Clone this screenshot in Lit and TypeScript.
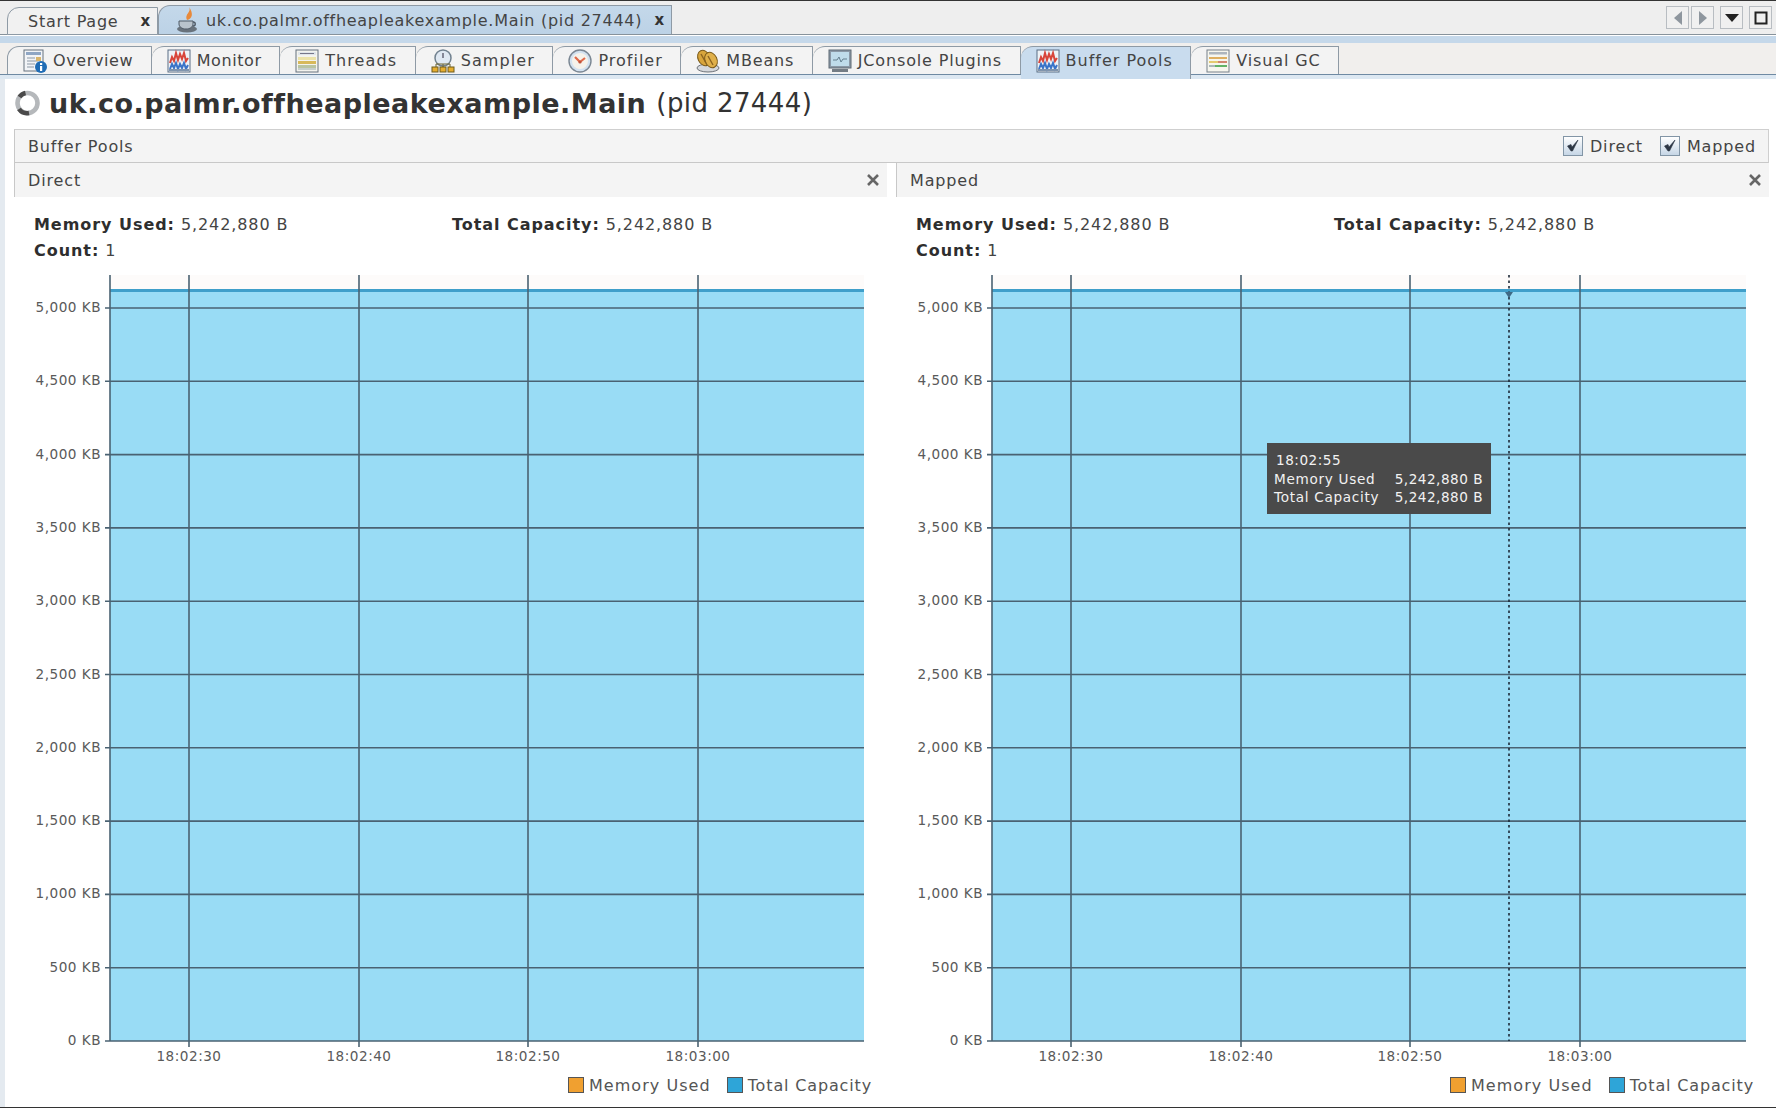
import { LitElement, html, css, svg } from "lit";
import { customElement } from "lit/decorators.js";

const F = svg;
const chartBars = F`<rect x="1" y="1" width="22" height="22" fill="#eef2f6" stroke="#5b6f85"/>
  <path d="M3 14 L5 8 L7 12 L9 4 L11 11 L13 5 L15 10 L17 4 L19 12 L21 9" fill="none" stroke="#d8453a" stroke-width="2"/>
  <path d="M3 20 L5 15 L7 19 L9 14 L11 20 L13 15 L15 19 L17 14 L19 20 L21 16" fill="none" stroke="#3a74c8" stroke-width="2"/>
  <rect x="2" y="20" width="20" height="2" fill="#7f94ad"/>`;

const icons: Record<string, unknown> = {
  overview: F`<rect x="1" y="1" width="19" height="21" fill="#f2f4f7" stroke="#66727f"/><rect x="3" y="3" width="15" height="3" fill="#8fa6c4"/>
    <path d="M4 9h8M4 12h11M4 15h8M4 18h7" stroke="#8c98a6" stroke-width="1.2"/><rect x="13" y="8" width="5" height="4" fill="#d9b56d"/>
    <circle cx="18" cy="18" r="6" fill="#1f6cb5"/><rect x="17" y="17" width="2.2" height="5" fill="#fff"/><rect x="17" y="14" width="2.2" height="2" fill="#fff"/>`,
  monitor: chartBars,
  threads: F`<rect x="1" y="1" width="22" height="22" fill="#f3f3ee" stroke="#66727f"/><rect x="3" y="3" width="18" height="3" fill="#dfe5ea"/><path d="M5 4.5h14" stroke="#778" stroke-width="1"/>
    <rect x="3" y="8" width="18" height="3" fill="#ece3a8"/><rect x="3" y="12" width="18" height="3" fill="#d7b95a"/><rect x="3" y="16" width="18" height="3" fill="#b9c4a2"/><path d="M3 20h18" stroke="#9aa" stroke-width="1"/>`,
  sampler: F`<circle cx="12" cy="9" r="8" fill="#dfe8f2" stroke="#71818f" stroke-width="1.5"/><path d="M12 4v5" stroke="#667" stroke-width="1.5"/>
    <path d="M5 19V15h14v4M12 15v4" stroke="#6c6430" fill="none"/><rect x="1" y="18" width="6" height="5" fill="#e6ad2e" stroke="#6d5b1c"/><rect x="9" y="18" width="6" height="5" fill="#e6ad2e" stroke="#6d5b1c"/><rect x="17" y="18" width="6" height="5" fill="#e6ad2e" stroke="#6d5b1c"/>`,
  profiler: F`<circle cx="12" cy="12" r="11" fill="#d3e2f0" stroke="#7b8793" stroke-width="1.4"/><circle cx="12" cy="12" r="8" fill="#f6f2ea"/>
    <path d="M12 13L7 8M12 13L17 9" stroke="#e06a4a" stroke-width="2.2"/><circle cx="12" cy="13" r="1.6" fill="#c0533a"/>`,
  mbeans: F`<ellipse cx="12" cy="19" rx="11" ry="4" fill="#d5d8dc" stroke="#6d7278"/><ellipse cx="8" cy="9" rx="6" ry="8" fill="#d8a53c" stroke="#7a5a1a" transform="rotate(-25 8 9)"/>
    <ellipse cx="15" cy="11" rx="6" ry="8" fill="#e0b04a" stroke="#7a5a1a" transform="rotate(-25 15 11)"/><path d="M5 5L10 14M12 7L17 16" stroke="#8c6420" stroke-width="1.4"/>`,
  jconsole: F`<rect x="1" y="1" width="22" height="18" fill="#8b99a6" stroke="#5f6a75"/><rect x="3" y="3" width="18" height="14" fill="#bfdcea"/>
    <path d="M5 11h4l2-3 2 5 2-3h4" fill="none" stroke="#64808f"/><rect x="4" y="20" width="16" height="3" fill="#747d85"/>`,
  buffer: chartBars,
  visualgc: F`<rect x="1" y="1" width="22" height="22" fill="#f6f6ee" stroke="#76808a"/><rect x="3" y="3" width="18" height="2.5" fill="#aeb6bd"/>
    <path d="M3 9h18" stroke="#d99e3c" stroke-width="1.6"/><path d="M3 13h9" stroke="#e0c050" stroke-width="1.6"/><path d="M12 13h9" stroke="#c96a50" stroke-width="1.6"/><path d="M3 17h6" stroke="#9aa" stroke-width="1.6"/><path d="M9 17h12" stroke="#3fa345" stroke-width="1.6"/>`,
};

const subTabs: [string, string, number][] = [
  ["Overview", "overview", 0.6], ["Monitor", "monitor", 0.6], ["Threads", "threads", 1.1], ["Sampler", "sampler", 1.1], ["Profiler", "profiler", 1.0],
  ["MBeans", "mbeans", 0.85], ["JConsole Plugins", "jconsole", 0.85], ["Buffer Pools", "buffer", 1.0], ["Visual GC", "visualgc", 0.85],
];

const yVals = [5000, 4500, 4000, 3500, 3000, 2500, 2000, 1500, 1000, 500, 0];
const xTicks: [number, string][] = [[175, "18:02:30"], [345, "18:02:40"], [514, "18:02:50"], [684, "18:03:00"]];
const yOf = (v: number) => 776 - (v / 500) * 73.3;
const fmt = (v: number) => v.toLocaleString("en-US") + " KB";

@customElement("pool-chart")
class PoolChart extends LitElement {
  static properties = { name: {}, hover: { type: Boolean } };
  name = "";
  hover = false;
  static styles = css`
    :host { display: flex; flex-direction: column; min-width: 0; }
    .head { height: 34px; box-sizing: border-box; display: flex; align-items: center; justify-content: space-between; padding: 0 7px 0 13px;
      background: #f4f4f4; border-left: 1px solid #c8c8c8; color: #444; }
    .info { display: grid; grid-template-columns: 418px 1fr; align-content: start; row-gap: 3px; padding: 17px 0 0 20px; height: 51px; line-height: 22.5px; color: #444; letter-spacing: 0.9px; }
    b { color: #2e2e2e; font-weight: 700; letter-spacing: 0.95px; }
    .plot { position: relative; height: 800px; }
    svg.c { display: block; font-family: "DejaVu Sans", sans-serif; }
    .axis { font-size: 13.6px; letter-spacing: 0.5px; fill: #5a5a5a; }
    .tip { position: absolute; left: 371px; top: 178px; width: 224px; height: 71px; box-sizing: border-box; background: #4a4a4a; color: #f2f2f2;
      font-size: 13.6px; letter-spacing: 0.7px; line-height: 18.5px; padding: 8px 8px 0 7px; }
    .tip div { display: flex; justify-content: space-between; white-space: pre; }
    .tip .v { letter-spacing: 0.5px; }
    .time { padding-left: 2px; letter-spacing: 0.5px; }
    .legend { display: flex; justify-content: flex-end; align-items: center; gap: 5px; padding-right: 15px; margin-top: 3px; color: #555; height: 34px; }
    .legend .m { letter-spacing: 1.05px; }
    .sw { width: 14px; height: 14px; border: 1px solid #555; }
    .sw.o { background: #f0a030; }
    .sw.b { background: #2ea5d8; margin-left: 11px; }
  `;
  render() {
    return html`
      <div class="head"><span>${this.name}</span>
        <svg width="14" height="14" viewBox="0 0 14 14"><path d="M2 2L12 12M12 2L2 12" stroke="#666" stroke-width="2.6"/></svg>
      </div>
      <div class="info">
        <span><b>Memory Used:</b> 5,242,880 B</span><span><b>Total Capacity:</b> 5,242,880 B</span>
        <span><b>Count:</b> 1</span>
      </div>
      <div class="plot">
        <svg class="c" width="873" height="800" viewBox="0 0 873 800">
          <rect x="96" y="10" width="754" height="14" fill="#fdfbfa"/>
          <rect x="96" y="24" width="754" height="752" fill="#99dcf5"/>
          <rect x="96" y="24" width="754" height="3" fill="#3f9fca"/>
          ${yVals.map((v) => svg`
            <line x1="91" x2="850" y1=${yOf(v)} y2=${yOf(v)} stroke="#4a6272" stroke-width="1.6"/>
            <text class="axis" x="87" y=${yOf(v) + 4} text-anchor="end">${fmt(v)}</text>`)}
          <line x1="96" x2="96" y1="10" y2="776" stroke="#4a6272" stroke-width="1.6"/>
          ${xTicks.map(([x, t]) => svg`
            <line x1=${x} x2=${x} y1="10" y2="782" stroke="#4a6272" stroke-width="1.6"/>
            <text class="axis" x=${x} y="796" text-anchor="middle">${t}</text>`)}
          ${this.hover ? svg`
            <line x1="613" x2="613" y1="10" y2="776" stroke="#1c2a38" stroke-width="1.6" stroke-dasharray="2.5 3"/>
            <path d="M609 27h8l-4 6z" fill="#3f6a85"/>` : ""}
        </svg>
        ${this.hover ? html`<div class="tip">
          <div class="time">18:02:55</div>
          <div><span>Memory Used</span><span class="v">5,242,880 B</span></div>
          <div><span>Total Capacity</span><span class="v">5,242,880 B</span></div>
        </div>` : ""}
      </div>
      <div class="legend">
        <span class="sw o"></span><span class="m">Memory Used</span>
        <span class="sw b"></span><span>Total Capacity</span>
      </div>`;
  }
}

@customElement("app-root")
export class AppRoot extends LitElement {
  static styles = css`
    :host { display: flex; flex-direction: column; width: 1776px; height: 1108px; overflow: hidden; box-sizing: border-box; background: #fff;
      font-family: "DejaVu Sans", sans-serif; font-size: 16px; letter-spacing: 0.85px; color: #444;
      border-top: 1px solid #333; border-bottom: 1px solid #333; }
    .bar1 { height: 34px; flex: none; box-sizing: border-box; display: flex; align-items: flex-end; padding-left: 7px; background: #eeeeee; border-bottom: 1px solid #87929b; }
    .ttab { height: 29px; box-sizing: border-box; display: flex; align-items: center; border: 1px solid #8e9aa5; border-bottom: none; border-top-left-radius: 12px; white-space: nowrap; }
    .ttab.start { padding-left: 20px; width: 151px; background: #f1f1f1; height: 28px; border-bottom: 1px solid #8e9aa5; margin-bottom: -1px; letter-spacing: 0.75px; }
    .ttab.act { padding-left: 17px; width: 514px; background: linear-gradient(#c4d8ea, #bcd2e6); gap: 8px; letter-spacing: 0.72px; }
    .x { font-weight: 700; margin-left: auto; margin-right: 6px; font-size: 15px; color: #333; }
    .nav { margin-left: auto; display: flex; gap: 2px; margin-right: 4px; margin-bottom: 5px; align-items: center; }
    .nb { width: 23px; height: 23px; box-sizing: border-box; border: 1px solid #b8bdc2; background: #f0f0f0; display: flex; align-items: center; justify-content: center; }
    .nb.gap { margin-left: 4px; }
    .strip { height: 7px; flex: none; margin-top: 1px; background: #c5d8ea; }
    .bar2 { height: 32px; flex: none; box-sizing: border-box; display: flex; align-items: flex-end; padding-left: 7px; background: #f1efed; border-bottom: 1px solid #6f8aa3; }
    .stab { height: 28px; box-sizing: border-box; display: flex; align-items: center; gap: 6px; padding: 0 17.5px 1px 15px; border: 1px solid #8e9aa5; border-left: none; border-bottom: none; border-top-left-radius: 12px; background: #f3f3f3; white-space: nowrap; }
    .stab svg { margin-top: 1px; }
    .stab.first { border-left: 1px solid #8e9aa5; }
    .stab.act { background: #c9dcee; height: 33px; margin-bottom: -5px; padding-bottom: 6px; position: relative; }
    .under { height: 4px; flex: none; background: #dde8f2; }
    .main { flex: 1; display: flex; min-height: 0; }
    .side { width: 5px; flex: none; background: #e4eaf0; }
    .content { flex: 1; display: flex; flex-direction: column; min-width: 0; padding-left: 9px; padding-right: 7px; }
    .title { height: 50px; flex: none; display: flex; align-items: center; gap: 8px; padding: 0 0 2px 1px; color: #333; font-size: 27px; letter-spacing: 0.5px; white-space: pre; box-sizing: border-box; }
    .title b { font-weight: 700; }
    .title span { font-size: 26px; letter-spacing: 0.4px; margin-left: 2px; }
    .pools { flex: none; height: 34px; box-sizing: border-box; display: flex; align-items: center; padding: 0 12px 0 13px; background: #f4f4f4; border: 1px solid #cfcfcf; border-bottom: 1px solid #c8c8c8; border-left: 1px solid #c8c8c8; }
    .checks { margin-left: auto; display: flex; align-items: center; }
    .cb { width: 20px; height: 20px; box-sizing: border-box; border: 1px solid #8295a6; background: linear-gradient(#fff, #c6d6e6); margin-right: 7px; display: flex; }
    .checks .l2 { margin-left: 17px; }
    .grid { display: grid; grid-template-columns: 873px 873px; column-gap: 9px; flex: 1; min-height: 0; }
  `;
  render() {
    const check = html`<span class="cb"><svg width="18" height="18" viewBox="0 0 18 18"><path d="M3.5 9l3.5-1.5 1 2.5 6-7-5.5 11H7z" fill="#2c3644" stroke="#2c3644" stroke-width=".6"/></svg></span>`;
    return html`
      <div class="bar1">
        <div class="ttab start">Start Page<span class="x">x</span></div>
        <div class="ttab act">
          <svg width="22" height="26" viewBox="0 0 22 26"><path d="M13 0c3 5-5 7-2 13 5-1 7-6 2-13z" fill="#e8893a"/><ellipse cx="11" cy="22" rx="10" ry="3.5" fill="#68727c"/><path d="M3 14h14v3c0 3-3 5-7 5s-7-2-7-5z" fill="#b9c3cc" stroke="#4f5a66"/><path d="M17 15c3 0 3 4 0 4" fill="none" stroke="#4f5a66" stroke-width="1.4"/></svg>
          uk.co.palmr.offheapleakexample.Main (pid 27444)<span class="x">x</span>
        </div>
        <div class="nav">
          <span class="nb"><svg width="10" height="14"><path d="M9 0v14L1 7z" fill="#8e969e"/></svg></span>
          <span class="nb"><svg width="10" height="14"><path d="M1 0v14l8-7z" fill="#8e969e"/></svg></span>
          <span class="nb gap"><svg width="16" height="10"><path d="M1 1h14L8 9z" fill="#222"/></svg></span>
          <span class="nb gap"><svg width="14" height="14"><rect x="1.5" y="1.5" width="11" height="11" fill="none" stroke="#222" stroke-width="2"/></svg></span>
        </div>
      </div>
      <div class="strip"></div>
      <div class="bar2">
        ${subTabs.map(([t, k, ls], i) => html`<div class="stab ${i === 0 ? "first" : ""} ${k === "buffer" ? "act" : ""}" style="letter-spacing:${ls}px">
          <svg width="24" height="24" viewBox="0 0 24 24">${icons[k]}</svg>${t}</div>`)}
      </div>
      <div class="under"></div>
      <div class="main">
        <div class="side"></div>
        <div class="content">
          <div class="title">
            <svg width="26" height="26" viewBox="0 0 26 26"><circle cx="12.5" cy="13" r="10" fill="none" stroke="#b5b8bb" stroke-width="4.6"/><path d="M4 19a10 10 0 0 0 10 4M4.500 7a10 10 0 0 1 6-4" fill="none" stroke="#4a4a4a" stroke-width="4.6"/></svg>
            <b>uk.co.palmr.offheapleakexample.Main</b><span>(pid 27444)</span>
          </div>
          <div class="pools">Buffer Pools
            <div class="checks">${check}Direct<span class="l2"></span>${check}Mapped</div>
          </div>
          <div class="grid">
            <pool-chart name="Direct"></pool-chart>
            <pool-chart name="Mapped" hover></pool-chart>
          </div>
        </div>
      </div>`;
  }
}
